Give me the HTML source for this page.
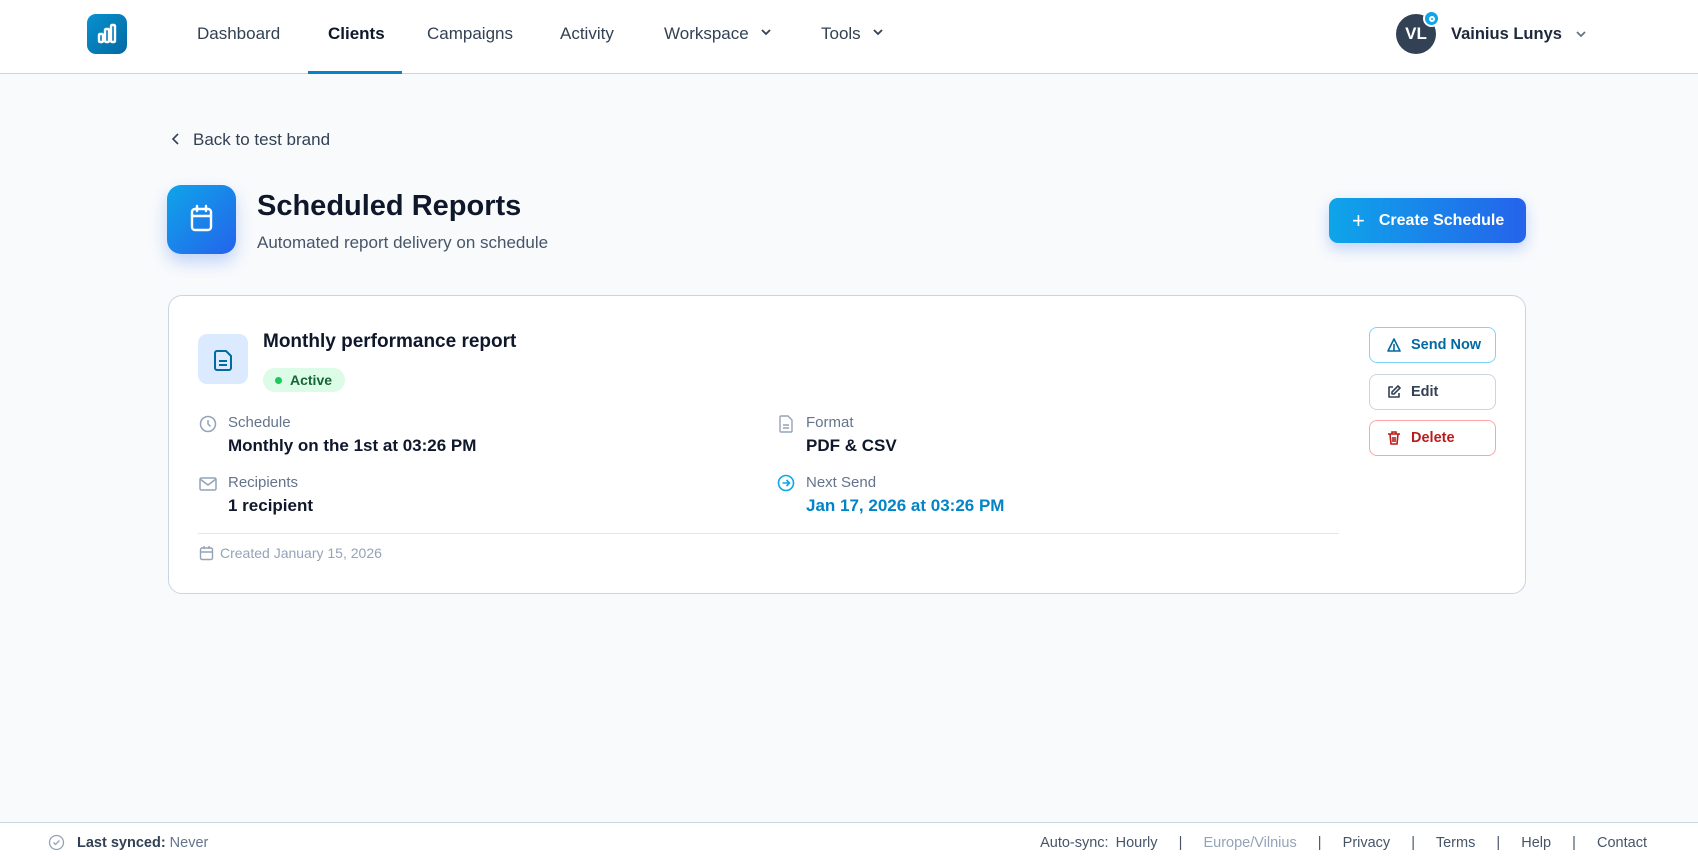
<!DOCTYPE html>
<html><head><meta charset="utf-8"><style>
*{box-sizing:border-box;margin:0;padding:0}
body{width:1698px;height:856px;background:#f8fafc;font-family:"Liberation Sans",sans-serif;color:#0f172a;position:relative;overflow:hidden}
.abs{position:absolute}
nav{position:absolute;left:0;top:0;width:1698px;height:74px;background:#fff;border-bottom:1px solid #cbd5e1}
.ni{position:absolute;top:24px;font-size:17px;color:#334155}
.lbl{font-size:15px;color:#64748b}
.val{font-size:17px;font-weight:bold;color:#0f172a}
.btn{position:absolute;left:1369px;width:127px;height:36px;border-radius:8px;background:#fff;font-size:14.5px;font-weight:bold;display:flex;align-items:center;padding-left:16px;gap:9px}
.ft{font-size:14.5px;color:#475569}
</style></head><body>
<nav>
 <div class="abs" style="left:87px;top:14px;width:40px;height:40px;border-radius:9px;background:linear-gradient(135deg,#0891d1,#0369a1)">
  <svg width="40" height="40" viewBox="0 0 40 40" fill="none" stroke="#fff" stroke-width="2.4" stroke-linecap="round"><rect x="12" y="20" width="4" height="8" rx="1"/><rect x="18" y="15" width="4" height="13" rx="1"/><rect x="24" y="11" width="4" height="17" rx="1"/></svg>
 </div>
 <div class="ni" style="left:197px">Dashboard</div>
 <div class="ni" style="left:328px;color:#0f172a;font-weight:bold">Clients</div>
 <div class="abs" style="left:308px;top:71px;width:94px;height:3px;background:#0284c7"></div>
 <div class="ni" style="left:427px">Campaigns</div>
 <div class="ni" style="left:560px">Activity</div>
 <div class="ni" style="left:664px">Workspace</div>
 <div class="ni" style="left:821px">Tools</div>
 <svg class="abs" style="left:760px;top:27px" width="12" height="10" viewBox="0 0 12 10"><path d="M2 3l4 4 4-4" stroke="#334155" stroke-width="1.8" fill="none"/></svg>
 <svg class="abs" style="left:872px;top:27px" width="12" height="10" viewBox="0 0 12 10"><path d="M2 3l4 4 4-4" stroke="#334155" stroke-width="1.8" fill="none"/></svg>
 <div class="abs" style="left:1396px;top:14px;width:40px;height:40px;border-radius:50%;background:#334155;color:#fff;font-weight:bold;font-size:17px;display:flex;align-items:center;justify-content:center">VL</div>
 <div class="abs" style="left:1423px;top:10px;width:17px;height:17px;border-radius:50%;background:#0ea5e9;border:2px solid #fff"><div style="position:absolute;left:3.5px;top:3.5px;width:6px;height:6px;border-radius:50%;border:2px solid #fff"></div></div>
 <div class="abs" style="left:1451px;top:25px;font-size:16.5px;font-weight:bold;color:#1e293b">Vainius Lunys</div>
 <svg class="abs" style="left:1575px;top:29px" width="12" height="10" viewBox="0 0 12 10"><path d="M2 3l4 4 4-4" stroke="#64748b" stroke-width="1.8" fill="none"/></svg>
</nav>

<svg class="abs" style="left:170px;top:131px" width="12" height="16" viewBox="0 0 12 16"><path d="M8 3L3 8l5 5" stroke="#334155" stroke-width="1.6" fill="none"/></svg>
<div class="abs" style="left:193px;top:130px;font-size:17px;color:#334155">Back to test brand</div>

<div class="abs" style="left:167px;top:185px;width:69px;height:69px;border-radius:14px;background:linear-gradient(135deg,#0ea5e9,#2563eb);box-shadow:0 8px 16px rgba(37,99,235,.25)">
 <svg width="69" height="69" viewBox="0 0 69 69" fill="none" stroke="#fff" stroke-width="2.4" stroke-linecap="round"><rect x="25" y="24" width="19" height="21" rx="3"/><path d="M25 31h19M30 21v5M39 21v5"/></svg>
</div>
<div class="abs" style="left:257px;top:190px;font-size:29px;font-weight:bold;color:#0f172a">Scheduled Reports</div>
<div class="abs" style="left:257px;top:233px;font-size:17px;color:#475569">Automated report delivery on schedule</div>

<div class="abs" style="left:1329px;top:198px;width:197px;height:45px;border-radius:9px;background:linear-gradient(90deg,#0ea5e9,#2563eb);box-shadow:0 6px 14px rgba(37,99,235,.25);color:#fff;font-size:16px;font-weight:bold;display:flex;align-items:center;padding-left:23px;white-space:nowrap"><span style="font-size:22px;font-weight:normal;margin-right:14px">+</span>Create Schedule</div>

<div class="abs" style="left:168px;top:295px;width:1358px;height:299px;background:#fff;border:1px solid #cbd5e1;border-radius:14px"></div>
<div class="abs" style="left:198px;top:334px;width:50px;height:50px;border-radius:9px;background:#dbeafe">
 <svg width="50" height="50" viewBox="0 0 50 50" fill="none" stroke="#0369a1" stroke-width="2" stroke-linejoin="round"><path d="M19 17h9l5 5v12a2 2 0 0 1-2 2H19a2 2 0 0 1-2-2V19a2 2 0 0 1 2-2z"/><path d="M21 27h8M21 31h8"/></svg>
</div>
<div class="abs" style="left:263px;top:331px;font-size:19px;font-weight:bold;color:#0f172a">Monthly performance report</div>
<div class="abs" style="left:263px;top:368px;width:82px;height:24px;border-radius:12px;background:#dcfce7;color:#166534;font-size:14px;font-weight:bold;display:flex;align-items:center;padding-left:12px"><span style="width:7px;height:7px;border-radius:50%;background:#22c55e;margin-right:8px"></span>Active</div>

<svg class="abs" style="left:199px;top:415px" width="18" height="18" viewBox="0 0 18 18" fill="none" stroke="#94a3b8" stroke-width="1.5"><circle cx="9" cy="9" r="7.5"/><path d="M9 5v4l2.5 2.5"/></svg>
<div class="abs lbl" style="left:228px;top:414px">Schedule</div>
<div class="abs val" style="left:228px;top:436px">Monthly on the 1st at 03:26 PM</div>
<svg class="abs" style="left:199px;top:476px" width="18" height="16" viewBox="0 0 18 16" fill="none" stroke="#94a3b8" stroke-width="1.5"><rect x="1" y="2" width="16" height="12" rx="1.5"/><path d="M1 3l8 6 8-6"/></svg>
<div class="abs lbl" style="left:228px;top:474px">Recipients</div>
<div class="abs val" style="left:228px;top:496px">1 recipient</div>

<svg class="abs" style="left:778px;top:414px" width="16" height="20" viewBox="0 0 16 20" fill="none" stroke="#94a3b8" stroke-width="1.4"><path d="M3 2h7l4 4v11a1 1 0 0 1-1 1H3a1 1 0 0 1-1-1V3a1 1 0 0 1 1-1z"/><path d="M5 11h6M5 14h6"/></svg>
<div class="abs lbl" style="left:806px;top:414px">Format</div>
<div class="abs val" style="left:806px;top:436px">PDF &amp; CSV</div>
<svg class="abs" style="left:777px;top:474px" width="18" height="18" viewBox="0 0 18 18" fill="none" stroke="#0ea5e9" stroke-width="1.6"><circle cx="9" cy="9" r="7.5"/><path d="M5.5 9h7M9.5 6l3 3-3 3"/></svg>
<div class="abs lbl" style="left:806px;top:474px">Next Send</div>
<div class="abs val" style="left:806px;top:496px;color:#0284c7">Jan 17, 2026 at 03:26 PM</div>

<div class="abs" style="left:198px;top:533px;width:1141px;height:1px;background:#e2e8f0"></div>
<svg class="abs" style="left:199px;top:545px" width="15" height="16" viewBox="0 0 15 16" fill="none" stroke="#94a3b8" stroke-width="1.4"><rect x="1.5" y="3" width="12" height="11.5" rx="1.5"/><path d="M1.5 7h12M5 1v3M10 1v3"/></svg>
<div class="abs" style="left:220px;top:545px;font-size:14px;color:#94a3b8">Created January 15, 2026</div>

<div class="btn" style="top:327px;border:1px solid #7dd3fc;color:#0369a1"><svg width="16" height="16" viewBox="0 0 16 16" fill="none" stroke="#0369a1" stroke-width="1.6" stroke-linejoin="round"><path d="M8 2L14 14H2z"/><path d="M8 7v7"/></svg>Send Now</div>
<div class="btn" style="top:374px;border:1px solid #cbd5e1;color:#334155"><svg width="16" height="16" viewBox="0 0 16 16" fill="none" stroke="#334155" stroke-width="1.6" stroke-linejoin="round"><path d="M7 3H3v10h10V9"/><path d="M12 2l2 2-6 6H6V8z"/></svg>Edit</div>
<div class="btn" style="top:420px;border:1px solid #fca5a5;color:#b91c1c"><svg width="16" height="16" viewBox="0 0 16 16" fill="none" stroke="#b91c1c" stroke-width="1.6"><path d="M2 4h12M6 4V2h4v2M4 4l1 10h6l1-10M7 7v5M9 7v5"/></svg>Delete</div>

<div class="abs" style="left:0;top:822px;width:1698px;height:34px;background:#fff;border-top:1px solid #cbd5e1"></div>
<svg class="abs" style="left:48px;top:834px" width="17" height="17" viewBox="0 0 17 17" fill="none" stroke="#94a3b8" stroke-width="1.3"><circle cx="8.5" cy="8.5" r="7"/><path d="M5.5 8.5l2 2 4-4"/></svg>
<div class="abs ft" style="left:77px;top:835px;color:#64748b"><b style="color:#334155">Last synced:</b> Never</div>
<div class="abs ft" style="right:51px;top:835px;word-spacing:3px">Auto-sync: Hourly &nbsp; | &nbsp; <span style="color:#94a3b8">Europe/Vilnius</span> &nbsp; | &nbsp; Privacy &nbsp; | &nbsp; Terms &nbsp; | &nbsp; Help &nbsp; | &nbsp; Contact</div>
</body></html>
